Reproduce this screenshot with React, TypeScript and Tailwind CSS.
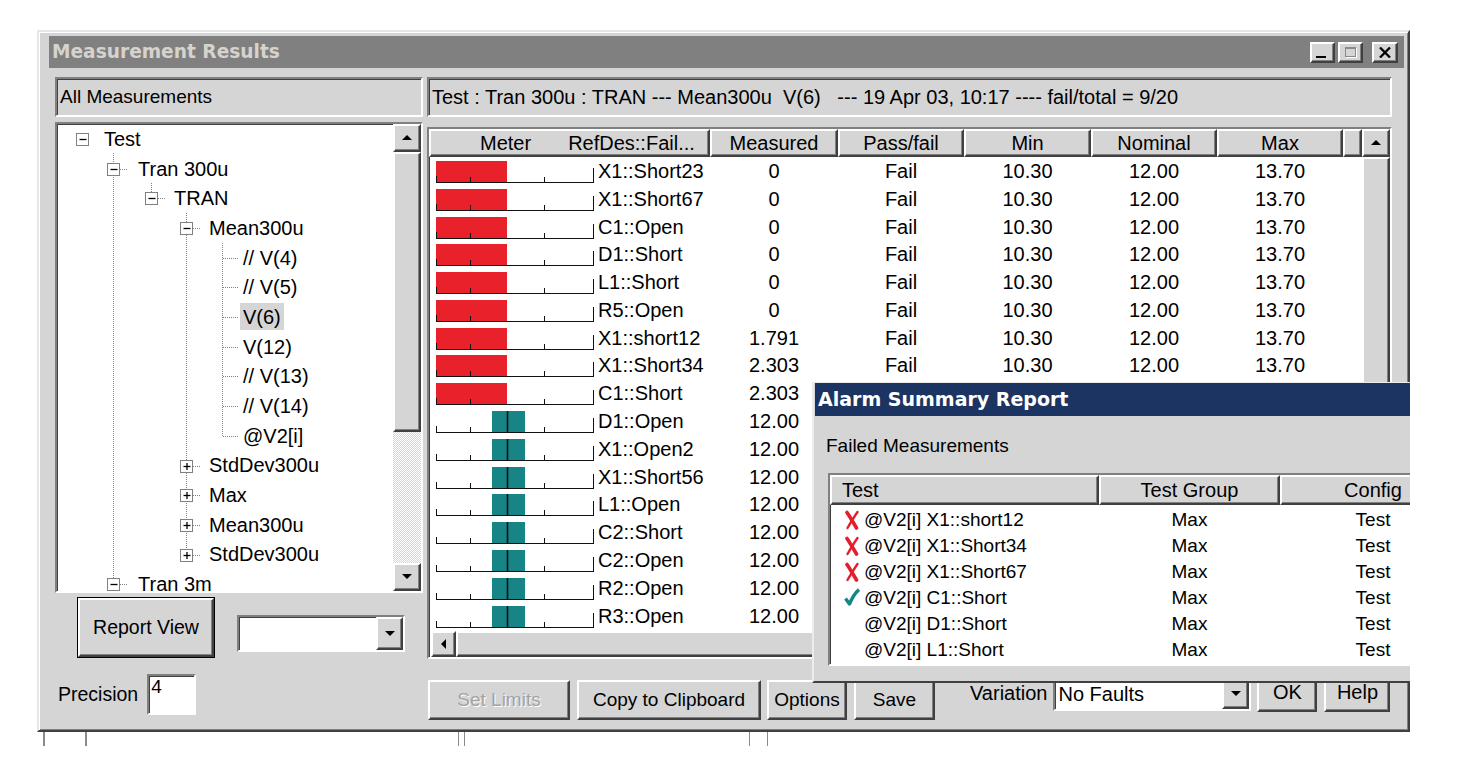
import React from "react";

// Win9x style bevels
const raised =
  "border-2 border-t-white border-l-white border-r-[#404040] border-b-[#404040] shadow-[inset_-1px_-1px_#808080]";
const sunken =
  "border-2 border-t-[#808080] border-l-[#808080] border-r-white border-b-white shadow-[inset_1px_1px_#404040]";
const dither =
  "bg-[repeating-conic-gradient(#ffffff_0%_25%,#d5d5d5_0%_50%)] bg-[length:2px_2px]";

const Arrow = ({ dir }: { dir: "up" | "down" | "left" }) => {
  if (dir === "left")
    return (
      <svg width="6" height="10">
        <polygon points="5,0 5,10 0,5" fill="#000" />
      </svg>
    );
  return (
    <svg width="10" height="6">
      <polygon points={dir === "up" ? "0,5 5,0 10,5" : "0,0 10,0 5,5"} fill="#000" />
    </svg>
  );
};

const ScrollBtn = ({ dir, className }: { dir: "up" | "down" | "left"; className: string }) => (
  <div className={`${raised} bg-[#d5d5d5] flex items-center justify-center shrink-0 ${className}`}>
    <Arrow dir={dir} />
  </div>
);

const TitleBtn = ({ children, className = "" }: { children: React.ReactNode; className?: string }) => (
  <div className={`${raised} bg-[#d5d5d5] w-[25px] h-[21px] flex items-center justify-center ${className}`}>
    {children}
  </div>
);

type TreeNode = { label: string; level: number; box?: "minus" | "plus"; selected?: boolean };

const tree: TreeNode[] = [
  { label: "Test", level: 0, box: "minus" },
  { label: "Tran 300u", level: 1, box: "minus" },
  { label: "TRAN", level: 2, box: "minus" },
  { label: "Mean300u", level: 3, box: "minus" },
  { label: "// V(4)", level: 4 },
  { label: "// V(5)", level: 4 },
  { label: "V(6)", level: 4, selected: true },
  { label: "V(12)", level: 4 },
  { label: "// V(13)", level: 4 },
  { label: "// V(14)", level: 4 },
  { label: "@V2[i]", level: 4 },
  { label: "StdDev300u", level: 3, box: "plus" },
  { label: "Max", level: 3, box: "plus" },
  { label: "Mean300u", level: 3, box: "plus" },
  { label: "StdDev300u", level: 3, box: "plus" },
  { label: "Tran 3m", level: 1, box: "minus" },
];

const pad = ["pl-[47px]", "pl-[81px]", "pl-[117px]", "pl-[152px]", "pl-[186px]"];
const boxX = [25, 56, 94, 129];
const yc = (i: number) => 14.85 + 29.7 * i;

const TreeLines = () => (
  <svg width="336" height="480" className="absolute left-0 top-0 pointer-events-none">
    <g stroke="#808080" strokeDasharray="1 1" fill="none">
      <line x1="56.5" y1="29" x2="56.5" y2={yc(15)} />
      <line x1="94.5" y1="59" x2="94.5" y2={yc(2)} />
      <line x1="129.5" y1="89" x2="129.5" y2={yc(14)} />
      <line x1="165.5" y1="119" x2="165.5" y2={yc(10)} />
      {tree.map((n, i) => {
        const y = Math.round(yc(i)) + 0.5;
        if (n.level === 4) return <line key={i} x1="166" y1={y} x2="181" y2={y} />;
        if (n.level === 0) return null;
        const cx = boxX[n.level];
        return <line key={i} x1={cx + 7} y1={y} x2={cx + 14} y2={y} />;
      })}
    </g>
    {tree.map((n, i) => {
      if (!n.box) return null;
      const cx = boxX[n.level];
      const cy = Math.round(yc(i));
      return (
        <g key={i}>
          <rect x={cx - 5.5} y={cy - 5.5} width="12" height="12" fill="#fff" stroke="#808080" />
          <line x1={cx - 2.5} y1={cy + 0.5} x2={cx + 4.5} y2={cy + 0.5} stroke="#000" strokeWidth="1.3" />
          {n.box === "plus" && (
            <line x1={cx + 1} y1={cy - 3} x2={cx + 1} y2={cy + 4} stroke="#000" strokeWidth="1.3" />
          )}
        </g>
      );
    })}
  </svg>
);

const TreeView = () => (
  <div className={`${sunken} bg-white h-[471px] mt-[5px] flex overflow-hidden`}>
    <div className="relative w-[336px] h-full overflow-hidden">
      <div className="flex flex-col">
        {tree.map((n, i) => (
          <div
            key={i}
            className={`h-[29.7px] shrink-0 flex items-center text-[20px] whitespace-pre ${
              n.selected ? "pl-[183px]" : pad[n.level]
            }`}
          >
            {n.selected ? (
              <span className="bg-[#d5d5d5] px-[3px] h-[27px] flex items-center">{n.label}</span>
            ) : (
              n.label
            )}
          </div>
        ))}
      </div>
      <TreeLines />
    </div>
    <div className="w-[28px] flex flex-col">
      <ScrollBtn dir="up" className="h-[28px]" />
      <div className={`${raised} bg-[#d5d5d5] h-[280px] shrink-0`} />
      <div className={`${dither} flex-1`} />
      <ScrollBtn dir="down" className="h-[28px]" />
    </div>
  </div>
);

type Row = [string, string, boolean];
const rows: Row[] = [
  ["X1::Short23", "0", true],
  ["X1::Short67", "0", true],
  ["C1::Open", "0", true],
  ["D1::Short", "0", true],
  ["L1::Short", "0", true],
  ["R5::Open", "0", true],
  ["X1::short12", "1.791", true],
  ["X1::Short34", "2.303", true],
  ["C1::Short", "2.303", true],
  ["D1::Open", "12.00", false],
  ["X1::Open2", "12.00", false],
  ["X1::Short56", "12.00", false],
  ["L1::Open", "12.00", false],
  ["C2::Short", "12.00", false],
  ["C2::Open", "12.00", false],
  ["R2::Open", "12.00", false],
  ["R3::Open", "12.00", false],
];

const Meter = ({ fail }: { fail: boolean }) => (
  <svg width="164" height="28" className="shrink-0 ml-[4px]">
    {fail ? (
      <rect x="3" y="4" width="71" height="21" fill="#e8212b" />
    ) : (
      <rect x="59" y="4" width="33" height="21" fill="#178585" />
    )}
    <g stroke="#111" fill="none">
      <line x1="3" y1="25.5" x2="161" y2="25.5" />
      <line x1="3.5" y1="19" x2="3.5" y2="26" />
      <line x1="37.5" y1="20" x2="37.5" y2="26" />
      <line x1="111.5" y1="20" x2="111.5" y2="26" />
      <line x1="160.5" y1="11" x2="160.5" y2="26" />
      {!fail && <line x1="74.5" y1="4" x2="74.5" y2="26" strokeWidth="1.6" />}
    </g>
  </svg>
);

const HeadCell = ({ w, children, className = "" }: { w: string; children?: React.ReactNode; className?: string }) => (
  <div className={`${raised} bg-[#d5d5d5] h-full shrink-0 flex items-center text-[20px] ${w} ${className}`}>
    {children}
  </div>
);

// rows from index 8 on sit under the alarm dialog from x=812 to the right
const hiddenFrom = 8;

const ResultsTable = () => (
  <div className={`${sunken} bg-white h-[532px] mt-[10px] flex flex-col overflow-hidden`}>
    <div className="flex h-[502px]">
      <div className="w-[933px] flex flex-col">
        <div className="h-[28px] flex shrink-0">
          <HeadCell w="w-[281px]" className="pl-[49px]">
            <span>Meter</span>
            <span className="ml-[37px]">RefDes::Fail...</span>
          </HeadCell>
          <HeadCell w="w-[128px]" className="justify-center">Measured</HeadCell>
          <HeadCell w="w-[126px]" className="justify-center">Pass/fail</HeadCell>
          <HeadCell w="w-[127px]" className="justify-center">Min</HeadCell>
          <HeadCell w="w-[126px]" className="justify-center">Nominal</HeadCell>
          <HeadCell w="w-[126px]" className="justify-center">Max</HeadCell>
          <HeadCell w="w-[19px]" />
        </div>
        <div className="flex flex-col overflow-hidden text-[20px]">
          {rows.map(([ref, val, fail], i) => (
            <div key={i} className="h-[27.8px] shrink-0 flex items-center">
              <div className="w-[281px] flex items-center shrink-0">
                <Meter fail={fail} />
                <span className="ml-[1px]">{ref}</span>
              </div>
              <div className="w-[128px] text-center">{val}</div>
              {i < hiddenFrom && (
                <>
                  <div className="w-[126px] text-center">{fail ? "Fail" : "Pass"}</div>
                  <div className="w-[127px] text-center">10.30</div>
                  <div className="w-[126px] text-center">12.00</div>
                  <div className="w-[126px] text-center">13.70</div>
                </>
              )}
            </div>
          ))}
        </div>
      </div>
      <div className="w-[28px] flex flex-col">
        <ScrollBtn dir="up" className="h-[28px]" />
        <div className={`${raised} bg-[#d5d5d5] h-[360px] shrink-0`} />
        <div className={`${dither} flex-1`} />
      </div>
    </div>
    <div className="flex h-[26px]">
      <div className="w-[933px] flex pl-[2px]">
        <ScrollBtn dir="left" className="w-[25px] h-full" />
        <div className={`${raised} bg-[#d5d5d5] flex-1`} />
      </div>
      <div className="w-[28px] bg-[#d5d5d5]" />
    </div>
  </div>
);

const Btn = ({ w, children, className = "" }: { w: string; children: React.ReactNode; className?: string }) => (
  <div className={`${raised} bg-[#d5d5d5] shrink-0 flex items-center justify-center text-[19px] ${w} ${className}`}>
    {children}
  </div>
);

const XMark = () => (
  <svg width="16" height="20" viewBox="0 0 16 20">
    <path d="M3 2.5 C6 7 9 12 12.5 18" stroke="#e41f2b" strokeWidth="3.6" fill="none" strokeLinecap="round" />
    <path d="M13.5 2 C10 7 7 12 3.5 18" stroke="#e41f2b" strokeWidth="2.4" fill="none" strokeLinecap="round" />
  </svg>
);

const CheckMark = () => (
  <svg width="16" height="20" viewBox="0 0 16 20">
    <path d="M1.5 10.5 L5.5 16 C8 10 11 5 15 1.5" stroke="#178585" strokeWidth="3.4" fill="none" strokeLinejoin="round" />
  </svg>
);

const alarms: { icon?: "x" | "check"; t: string }[] = [
  { icon: "x", t: "@V2[i] X1::short12" },
  { icon: "x", t: "@V2[i] X1::Short34" },
  { icon: "x", t: "@V2[i] X1::Short67" },
  { icon: "check", t: "@V2[i] C1::Short" },
  { t: "@V2[i] D1::Short" },
  { t: "@V2[i] L1::Short" },
];

const AlarmDialog = () => (
  <div className="absolute left-[812px] top-[382px] w-[680px] h-[301px] bg-[#d5d5d5] border-l-2 border-t border-b-2 border-l-[#ececec] border-t-[#ececec] border-b-[#404040] pl-[1px] flex flex-col">
    <div className="h-[33px] shrink-0 bg-[#1c3461] flex items-center pl-[3px]">
      <span className="font-['DejaVu_Sans',sans-serif] font-bold text-[19px] text-white">Alarm Summary Report</span>
    </div>
    <div className="h-[57px] shrink-0 pl-[11px] pt-[18px] text-[19px] leading-[24px]">Failed Measurements</div>
    <div className={`${sunken} bg-white ml-[13px] h-[193px] shrink-0 flex flex-col`}>
      <div className="h-[30px] flex shrink-0">
        <HeadCell w="w-[269px]" className="pl-[10px]">Test</HeadCell>
        <HeadCell w="w-[181px]" className="justify-center">Test Group</HeadCell>
        <HeadCell w="w-[186px]" className="justify-center">Config</HeadCell>
      </div>
      <div className="flex flex-col pt-[2px] text-[19px]">
        {alarms.map((a, i) => (
          <div key={i} className="h-[26px] flex items-center">
            <div className="w-[269px] flex items-center pl-[14px] shrink-0">
              <div className="w-[16px] h-[20px] shrink-0">
                {a.icon === "x" && <XMark />}
                {a.icon === "check" && <CheckMark />}
              </div>
              <span className="ml-[4px]">{a.t}</span>
            </div>
            <div className="w-[181px] text-center">Max</div>
            <div className="w-[186px] text-center">Test</div>
          </div>
        ))}
      </div>
    </div>
  </div>
);

const Window = () => (
  <div className="w-[1373px] h-[702px] border-2 border-t-[#e6e6e6] border-l-[#e6e6e6] border-r-[#404040] border-b-[#404040] bg-[#d5d5d5] shadow-[inset_1px_1px_#ffffff,inset_-1px_-1px_#808080] pt-[4px] pl-[10px] pr-[4px] flex flex-col">
    <div className="h-[32px] shrink-0 bg-[#808080] flex items-center pl-[3px] pr-[6px]">
      <span className="font-['DejaVu_Sans',sans-serif] font-bold text-[18.6px] text-[#d6d3ce]">Measurement Results</span>
      <div className="ml-auto flex items-center">
        <TitleBtn>
          <div className="w-[10px] h-[2px] bg-black mt-[9px] mr-[3px]" />
        </TitleBtn>
        <TitleBtn className="ml-[3px]">
          <div className="w-[11px] h-[10px] border border-t-2 border-[#8a8a8a] shadow-[1px_1px_#ffffff]" />
        </TitleBtn>
        <TitleBtn className="ml-[9px] w-[26px]">
          <svg width="12" height="11">
            <path d="M1 0.5 L11 10.5 M11 0.5 L1 10.5" stroke="#000" strokeWidth="2.3" />
          </svg>
        </TitleBtn>
      </div>
    </div>

    <div className="flex pl-[6px] pt-[9px]">
      {/* left pane */}
      <div className="w-[368px] flex flex-col">
        <div className={`${sunken} h-[40px] flex items-center pl-[3px] text-[19px]`}>All Measurements</div>
        <TreeView />
        <div className="flex mt-[4px]">
          <div className="ml-[22px] border border-black">
            <div className={`${raised} bg-[#d5d5d5] w-[136px] h-[59px] flex items-center justify-center text-[19.5px]`}>
              Report View
            </div>
          </div>
          <div className={`${sunken} bg-white ml-[22px] mt-[18px] w-[168px] h-[37px] flex justify-end`}>
            <ScrollBtn dir="down" className="w-[27px] h-full" />
          </div>
        </div>
        <div className="flex items-center mt-[16px]">
          <span className="ml-[3px] text-[19.5px]">Precision</span>
          <div className={`${sunken} bg-white ml-[9px] w-[49px] h-[41px] pl-[2px] text-[19px] leading-[22px]`}>4</div>
        </div>
      </div>

      {/* right pane */}
      <div className="w-[965px] ml-[4px] flex flex-col">
        <div className={`${sunken} h-[40px] flex items-center pl-[3px] text-[20px] whitespace-pre`}>
          {"Test : Tran 300u : TRAN --- Mean300u  V(6)   --- 19 Apr 03, 10:17 ---- fail/total = 9/20"}
        </div>
        <ResultsTable />
        <div className="flex items-start mt-[13px]">
          <Btn w="w-[142px]" className="h-[40px] mt-[8px] ml-[1px] text-[#a3a3a3] [text-shadow:1px_1px_#ffffff]">
            Set Limits
          </Btn>
          <Btn w="w-[184px]" className="h-[40px] mt-[8px] ml-[7px]">Copy to Clipboard</Btn>
          <Btn w="w-[80px]" className="h-[40px] mt-[8px] ml-[6px]">Options</Btn>
          <Btn w="w-[81px]" className="h-[40px] mt-[8px] ml-[7px]">Save</Btn>
          <span className="ml-[35px] mt-[9px] text-[20px] leading-[24px]">Variation</span>
          <div className={`${sunken} bg-white ml-[6px] mt-[5px] w-[198px] h-[34px] flex items-center`}>
            <span className="pl-[3px] text-[20px]">No Faults</span>
            <ScrollBtn dir="down" className="ml-auto w-[27px] h-full" />
          </div>
          <Btn w="w-[60px]" className="h-[40px] ml-[6px] text-[20px]">OK</Btn>
          <Btn w="w-[66px]" className="h-[40px] ml-[7px] text-[20px]">Help</Btn>
        </div>
      </div>
    </div>
  </div>
);

const BottomStrip = () => (
  <div className="flex h-[14px]">
    <div className="w-[6px]" />
    <div className="w-[2px] bg-[#8a8a8a]" />
    <div className="w-[40px]" />
    <div className="w-[2px] bg-[#8a8a8a]" />
    <div className="w-[371px]" />
    <div className="w-[1px] bg-[#8a8a8a]" />
    <div className="w-[5px]" />
    <div className="w-[1px] bg-[#8a8a8a]" />
    <div className="w-[284px]" />
    <div className="w-[1px] bg-[#8a8a8a]" />
    <div className="w-[17px]" />
    <div className="w-[1px] bg-[#8a8a8a]" />
  </div>
);

export default function App() {
  return (
    <div className="w-[1462px] h-[774px] bg-white font-['Liberation_Sans',Arial,sans-serif] text-black">
      <div className="relative w-[1410px] h-[774px] overflow-hidden pl-[37px] pt-[30px]">
        <Window />
        <BottomStrip />
        <AlarmDialog />
      </div>
    </div>
  );
}
